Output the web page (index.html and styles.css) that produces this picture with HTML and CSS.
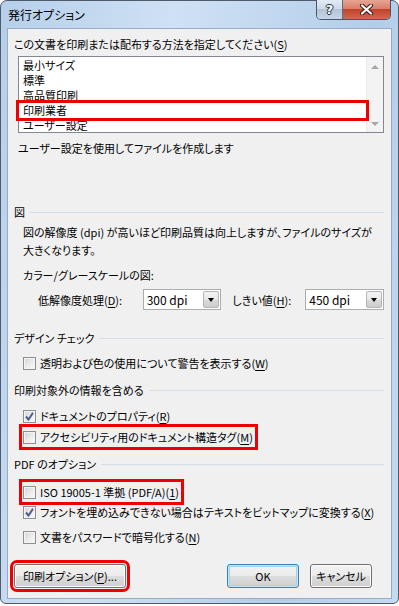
FILE: index.html
```html
<!DOCTYPE html>
<html lang="ja">
<head>
    <meta charset="UTF-8">
    <meta name="viewport" content="width=device-width, initial-scale=1.0">
    <title>発行オプション</title>
    <link rel="stylesheet" href="styles.css">
</head>
<body>
    <div class="window">
        <!-- Title bar -->
        <div class="titlebar">
            <span class="title">発行オプション</span>
            <div class="caption-buttons">
                <span class="cap-btn help">?</span>
                <span class="cap-btn close">
                    <svg width="15" height="11" viewBox="0 0 15 11">
                        <path d="M3 1.5 L12 9.5 M12 1.5 L3 9.5" stroke="#3d1d18" stroke-width="4.2" stroke-linecap="round"/>
                        <path d="M3 1.5 L12 9.5 M12 1.5 L3 9.5" stroke="#fff" stroke-width="2.2" stroke-linecap="round"/>
                    </svg>
                </span>
            </div>
        </div>

        <div class="client">
            <div class="label">この文書を印刷または配布する方法を指定してください(<u>S</u>)</div>

            <!-- Preset list -->
            <div class="listbox">
                <ul class="items">
                    <li>最小サイズ</li>
                    <li>標準</li>
                    <li>高品質印刷</li>
                    <li class="marked">印刷業者</li>
                    <li>ユーザー設定</li>
                </ul>
                <div class="scrollbar">
                    <span class="arrow up"></span>
                    <span class="arrow down"></span>
                </div>
            </div>
            <div class="desc">ユーザー設定を使用してファイルを作成します</div>

            <!-- Pictures -->
            <div class="group-head head-pictures">図</div>
            <p class="para">図の解像度 (dpi) が高いほど印刷品質は向上しますが、ファイルのサイズが<br>大きくなります。</p>
            <div class="sub-label">カラー/グレースケールの図:</div>
            <div class="select-row">
                <span class="sel-label first">低解像度処理(<u>D</u>):</span>
                <div class="combo first">
                    <span class="combo-text">300 dpi</span>
                    <span class="combo-btn"></span>
                </div>
                <span class="sel-label second">しきい値(<u>H</u>):</span>
                <div class="combo second">
                    <span class="combo-text">450 dpi</span>
                    <span class="combo-btn"></span>
                </div>
            </div>

            <!-- Design check -->
            <div class="group-head head-design">デザイン チェック</div>
            <div class="check-row cb-warn">
                <span class="cb"></span>
                <span>透明および色の使用について警告を表示する(<u>W</u>)</span>
            </div>

            <!-- Non-printing info -->
            <div class="group-head head-info">印刷対象外の情報を含める</div>
            <div class="check-row cb-props">
                <span class="cb checked"><svg width="11" height="11" viewBox="0 0 11 11"><path d="M2 5.5 L4.5 8.5 L9 1.8" fill="none" stroke="#4d5f8f" stroke-width="2"/></svg></span>
                <span>ドキュメントのプロパティ(<u>R</u>)</span>
            </div>
            <div class="check-row marked cb-tags">
                <span class="cb"></span>
                <span>アクセシビリティ用のドキュメント構造タグ(<u>M</u>)</span>
            </div>

            <!-- PDF options -->
            <div class="group-head head-pdf">PDF のオプション</div>
            <div class="check-row marked cb-iso">
                <span class="cb"></span>
                <span>ISO 19005-1 準拠 (PDF/A)(<u>1</u>)</span>
            </div>
            <div class="check-row cb-bitmap">
                <span class="cb checked"><svg width="11" height="11" viewBox="0 0 11 11"><path d="M2 5.5 L4.5 8.5 L9 1.8" fill="none" stroke="#4d5f8f" stroke-width="2"/></svg></span>
                <span>フォントを埋め込みできない場合はテキストをビットマップに変換する(<u>X</u>)</span>
            </div>
            <div class="check-row cb-encrypt">
                <span class="cb"></span>
                <span>文書をパスワードで暗号化する(<u>N</u>)</span>
            </div>

            <!-- Buttons -->
            <div class="button-row">
                <button class="btn btn-print marked">印刷オプション(<u>P</u>)...</button>
                <button class="btn btn-ok">OK</button>
                <button class="btn btn-cancel">キャンセル</button>
            </div>
        </div>
    </div>
</body>
</html>
```

FILE: styles.css
```css
* {
    box-sizing: border-box;
    margin: 0;
    padding: 0;
}
body {
    font-family: "Noto Sans CJK JP", "Noto Sans", sans-serif;
    font-size: 11px;
    font-feature-settings: "palt";
    color: #000;
    background-color: #fff;
}
u {
    text-decoration-thickness: 1px;
    text-underline-offset: 2px;
}

/* Window frame */
.window {
    width: 399px;
    height: 604px;
    border: 1px solid #4f5b6a;
    border-radius: 7px 7px 6px 6px;
    background: linear-gradient(100deg, #b6cfea 0%, #cfe1f4 35%, #c2d8ef 55%, #b3cde9 75%, #c6dbf1 100%);
    padding: 0 6px 4px 6px;
    display: flex;
    flex-direction: column;
}
.titlebar {
    height: 27px;
    display: flex;
    justify-content: space-between;
    align-items: flex-start;
}
.title {
    font-size: 12px;
    line-height: 27px;
    padding-left: 1px;
}
.caption-buttons {
    display: flex;
    margin-right: 1px;
    margin-top: -1px;
    border: 1px solid #4a5666;
    border-top: none;
    border-radius: 0 0 5px 5px;
    overflow: hidden;
}
.cap-btn {
    height: 19px;
    display: flex;
    align-items: center;
    justify-content: center;
}
.cap-btn.help {
    width: 26px;
    background: linear-gradient(#e2ebf5 0%, #ccdaea 45%, #b3c4d7 50%, #c5d6e8 100%);
    border-right: 1px solid #5f6d7e;
    color: #fff;
    font-family: "DejaVu Sans", sans-serif;
    font-weight: bold;
    font-size: 13px;
    text-shadow: 0 0 1px #2c3440, 1px 0 0 #2c3440, -1px 0 0 #2c3440, 0 1px 0 #2c3440, 0 -1px 0 #2c3440;
}
.cap-btn.close {
    width: 47px;
    background: linear-gradient(#e8a493 0%, #d8806c 45%, #c2432c 50%, #d2684e 100%);
}

/* Client area */
.client {
    flex: 1;
    border: 1px solid #97abc4;
    background-color: #f0f0f0;
    padding: 8px 7px 10px 6px;
    display: flex;
    flex-direction: column;
}
.label {
    line-height: 15px;
}
.listbox {
    margin-top: 4px;
    margin-left: 4px;
    height: 77px;
    border: 1px solid #828790;
    background-color: #fff;
    display: flex;
}
.items {
    flex: 1;
    list-style: none;
    padding-top: 1px;
}
.items li {
    line-height: 15px;
    height: 15px;
    padding-left: 4px;
}
.items li.marked {
    position: relative;
    z-index: 1;
    outline: 3px solid #ee0000;
}
.scrollbar {
    width: 17px;
    background-color: #f3f3f3;
    border-left: 1px solid #ececec;
    display: flex;
    flex-direction: column;
    justify-content: space-between;
    align-items: center;
    padding: 8px 0 6px;
}
.arrow {
    width: 0;
    height: 0;
    border-left: 4px solid transparent;
    border-right: 4px solid transparent;
}
.arrow.up {
    border-bottom: 4px solid #a7a7a7;
}
.arrow.down {
    border-top: 4px solid #a7a7a7;
}
.desc {
    margin-top: 8px;
    padding-left: 4px;
    line-height: 15px;
}

/* Group headings with rule */
.group-head {
    display: flex;
    align-items: center;
    line-height: 15px;
}
.group-head::after {
    content: "";
    flex: 1;
    border-top: 1px solid #d5dee6;
    margin-left: 5px;
}
.head-pictures {
    margin-top: 49px;
}
.head-design {
    margin-top: 21px;
}
.head-info {
    margin-top: 10px;
}
.head-pdf {
    margin-top: 10px;
}
.para {
    margin-top: 3px;
    padding-left: 9px;
    line-height: 18px;
}
.sub-label {
    margin-top: 9px;
    padding-left: 9px;
    line-height: 15px;
}

/* Resolution dropdowns */
.select-row {
    margin-top: 6px;
    display: flex;
    align-items: center;
    height: 21px;
    padding-left: 24px;
}
.sel-label.first {
    width: 105px;
}
.sel-label.second {
    width: 73px;
    margin-left: 11px;
}
.combo {
    height: 21px;
    display: flex;
    border: 1px solid #abadb3;
    background-color: #fff;
}
.combo.first {
    width: 79px;
}
.combo.second {
    width: 79px;
}
.combo-text {
    flex: 1;
    padding-left: 3px;
    line-height: 19px;
    font-size: 12px;
}
.combo-btn {
    width: 16px;
    margin: 1px;
    border: 1px solid #b5b5b5;
    border-radius: 2px;
    background: linear-gradient(#f3f3f3 0%, #e8e8e8 50%, #d9d9d9 51%, #cdcdcd 100%);
    display: flex;
    align-items: center;
    justify-content: center;
}
.combo-btn::after {
    content: "";
    border-left: 3.5px solid transparent;
    border-right: 3.5px solid transparent;
    border-top: 4px solid #000;
}

/* Checkboxes */
.check-row {
    display: flex;
    align-items: center;
    height: 20px;
    padding-left: 9px;
    gap: 4px;
}
.check-row.marked {
    align-self: flex-start;
    margin-left: 8px;
    padding-left: 1px;
    padding-right: 2px;
    outline: 3px solid #ee0000;
}
.cb {
    width: 13px;
    height: 13px;
    border: 1px solid #8e8f8f;
    background: linear-gradient(135deg, #d3d3d3 0%, #eeeeee 60%, #fbfbfb 100%);
    box-shadow: inset 0 0 0 1px #f4f4f4;
    display: flex;
    align-items: center;
    justify-content: center;
}
.cb-warn {
    margin-top: 7px;
}
.cb-props {
    margin-top: 8px;
}
.cb-tags {
    margin-top: 1px;
}
.cb-iso {
    margin-top: 10px;
}
.cb-encrypt {
    margin-top: 5px;
}

/* Dialog buttons */
.button-row {
    margin-top: 17px;
    display: flex;
    padding-right: 12px;
}
.btn {
    height: 24px;
    font-family: inherit;
    font-size: 11px;
    font-feature-settings: "palt";
    color: #000;
    border: 1px solid #707070;
    border-radius: 3px;
    background: linear-gradient(#f2f2f2 0%, #ebebeb 50%, #dddddd 51%, #cfcfcf 100%);
    box-shadow: inset 0 0 0 1px #fbfbfb;
}
.btn-print {
    width: 112px;
    outline-offset: 1px;
}
.btn-print.marked {
    outline: 3px solid #ee0000;
}
.btn-ok {
    width: 72px;
    margin-left: auto;
    border-color: #3c7fb1;
    box-shadow: inset 0 0 0 1px #c4e6f8, inset 0 0 0 2px #9fd2ef;
}
.btn-cancel {
    width: 62px;
    margin-left: 11px;
}
```
